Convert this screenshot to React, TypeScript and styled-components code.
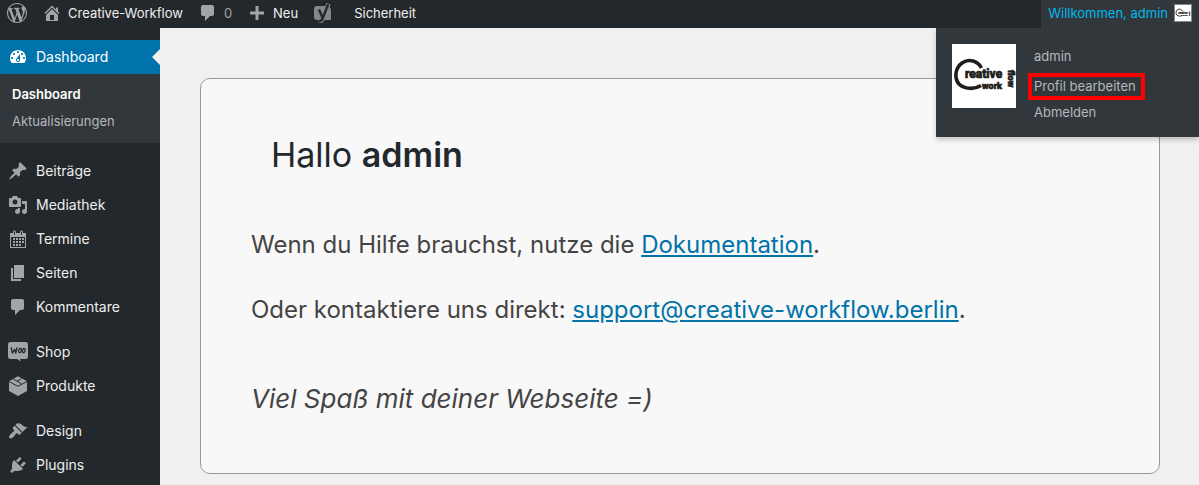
import React from 'react';
import styled, { createGlobalStyle } from 'styled-components';

const GlobalStyle = createGlobalStyle`
  *, *::before, *::after { box-sizing: border-box; }
  body {
    margin: 0;
    background: #f0f0f0;
    font-family: Inter, "Liberation Sans", sans-serif;
    font-size: 13px;
    line-height: 20px;
    color: #444;
  }
  ul { list-style: none; margin: 0; padding: 0; }
  a { color: inherit; text-decoration: none; }
`;

const Page = styled.div`
  display: flex;
  flex-direction: column;
  height: 100vh;
  overflow: hidden;
`;

const Toolbar = styled.header`
  display: flex;
  align-items: stretch;
  justify-content: space-between;
  flex: none;
  height: 28px;
  padding-left: 7px;
  background: #23282d;
  color: #eee;
`;

const ToolbarItems = styled.nav`
  display: flex;
  align-items: center;
  gap: 15px;
`;

const ToolbarLink = styled.a<{ $muted?: boolean; $spaced?: boolean }>`
  display: flex;
  align-items: center;
  gap: 6px;
  padding-bottom: 2px;
  padding-right: ${(p) => (p.$spaced ? '6px' : '0')};
  color: #eee;
  span { color: ${(p) => (p.$muted ? '#9ea3a8' : '#eee')}; }
`;

const Account = styled.div`
  position: relative;
  display: flex;
`;

const AccountButton = styled.button`
  display: flex;
  align-items: center;
  gap: 6px;
  border: 0;
  padding: 0 7px 2px 7px;
  background: #32373c;
  color: #00b9eb;
  font: inherit;
`;

const SmallAvatar = styled.span`
  display: flex;
  width: 18px;
  height: 18px;
  border: 1px solid #82878c;
  background: #fff;
`;

const AccountMenu = styled.div`
  position: absolute;
  top: 100%;
  right: 0;
  z-index: 2;
  display: flex;
  align-items: flex-start;
  gap: 12px;
  width: 263px;
  padding: 16px 16px 12px;
  background: #32373c;
  box-shadow: 0 3px 5px rgba(0, 0, 0, 0.2);
  color: #b4b9be;
`;

const Avatar = styled.span`
  display: flex;
  flex: none;
  width: 64px;
  height: 64px;
  background: #fff;
`;

const AccountLinks = styled.ul`
  display: flex;
  flex-direction: column;
  align-items: flex-start;
`;

const AccountLink = styled.a<{ $marked?: boolean }>`
  display: block;
  border: ${(p) => (p.$marked ? '4px solid #f00' : '0 solid')};
  margin: ${(p) => (p.$marked ? '4px 0 0' : '0')};
  padding: ${(p) => (p.$marked ? '0 5px 0 2px' : '0 6px')};
  line-height: ${(p) => (p.$marked ? '19px' : '25px')};
`;

const Body = styled.div`
  display: flex;
  flex: 1;
  min-height: 0;
`;

const Sidebar = styled.nav`
  flex: none;
  width: 160px;
  padding-top: 12px;
  background: #23282d;
  color: #eee;
  overflow: hidden;
`;

const MenuGroup = styled.ul`
  margin-bottom: 11px;
`;

const MenuLink = styled.a<{ $current?: boolean }>`
  position: relative;
  display: flex;
  align-items: center;
  gap: 8px;
  height: 34px;
  padding-left: 8px;
  font-size: 14px;
  color: ${(p) => (p.$current ? '#fff' : '#eee')};
  background: ${(p) => (p.$current ? '#0073aa' : 'transparent')};
  svg { color: ${(p) => (p.$current ? '#fff' : '#a0a5aa')}; }
  &::after {
    content: '';
    display: ${(p) => (p.$current ? 'block' : 'none')};
    position: absolute;
    top: 9px;
    right: 0;
    border: 8px solid transparent;
    border-left-width: 0;
    border-right-color: #f0f0f0;
  }
`;

const Submenu = styled.ul`
  padding: 7px 0 8px 12px;
  background: #32373c;
`;

const SubmenuLink = styled.a<{ $current?: boolean }>`
  display: block;
  line-height: 27px;
  color: ${(p) => (p.$current ? '#fff' : '#b4b9be')};
  font-weight: ${(p) => (p.$current ? 600 : 400)};
`;

const Main = styled.main`
  flex: 1;
  min-width: 0;
  padding: 50px 39px 11px 40px;
`;

const Panel = styled.section`
  padding: 56px 50px 54px;
  border: 1px solid #999;
  border-radius: 10px;
  background: #f8f8f8;
`;

const Title = styled.h1`
  margin: 0 20px 50px;
  color: #23282d;
  font-size: 34px;
  font-weight: 400;
  line-height: 40px;
  strong { font-weight: 600; }
`;

const Paragraph = styled.p<{ $closing?: boolean }>`
  margin: ${(p) => (p.$closing ? '49px 0 0' : '0 0 25px')};
  font-size: ${(p) => (p.$closing ? '26px' : '24px')};
  font-style: ${(p) => (p.$closing ? 'italic' : 'normal')};
  line-height: 40px;
  a { color: #0073aa; text-decoration: underline; }
`;

const icons = {
  wordpress:
    'M20 10c0-5.51-4.49-10-10-10C4.48 0 0 4.49 0 10c0 5.52 4.48 10 10 10 5.51 0 10-4.48 10-10zM7.78 15.37L4.37 6.22c.55-.02 1.17-.08 1.17-.08.5-.06.44-1.13-.06-1.11 0 0-1.45.11-2.37.11-.18 0-.37 0-.58-.01C4.12 2.69 6.87 1.11 10 1.11c2.33 0 4.45.87 6.05 2.34-.68-.11-1.65.39-1.65 1.58 0 .74.45 1.36.9 2.1.35.61.55 1.36.55 2.46 0 1.49-1.4 5-1.4 5l-3.03-8.37c.54-.02.82-.17.82-.17.5-.05.44-1.25-.06-1.22 0 0-1.44.12-2.38.12-.87 0-2.33-.12-2.33-.12-.5-.03-.56 1.2-.06 1.22l.92.08 1.26 3.41zM17.41 10c.24-.64.74-1.87.43-4.25.7 1.29 1.05 2.71 1.05 4.25 0 3.29-1.73 6.24-4.4 7.78.97-2.59 1.94-5.2 2.92-7.78zM6.1 18.09C3.12 16.65 1.11 13.53 1.11 10c0-1.3.23-2.48.72-3.59C3.25 10.3 4.67 14.2 6.1 18.09zm4.03-6.63l2.58 6.98c-.86.29-1.76.45-2.71.45-.79 0-1.57-.11-2.29-.33.81-2.38 1.62-4.74 2.42-7.1z',
  home: 'M16 8.5l1.53 1.53-1.06 1.06L10 4.6l-6.47 6.49-1.06-1.06L10 2.5l4 4v-2h2v4zm-6-2.46l6 5.99V18H4v-5.97zM12 17v-5H8v5h4z',
  comment: 'M5 2h9c1.1 0 2 .9 2 2v7c0 1.1-.9 2-2 2h-2l-5 5v-5H5c-1.1 0-2-.9-2-2V4c0-1.1.9-2 2-2z',
  plus: 'M17 8.500v3h-5.500V17h-3v-5.500H3v-3h5.500V3h3v5.500z',
  dashboard:
    'M3.76 16h12.48c1.1-1.37 1.76-3.11 1.76-5 0-4.42-3.58-8-8-8s-8 3.58-8 8c0 1.89.66 3.63 1.76 5zM10 4c.55 0 1 .45 1 1s-.45 1-1 1-1-.45-1-1 .45-1 1-1zM6 6c.55 0 1 .45 1 1s-.45 1-1 1-1-.45-1-1 .45-1 1-1zm8 0c.55 0 1 .45 1 1s-.45 1-1 1-1-.45-1-1 .45-1 1-1zm-5.37 5.55L12 7v6c0 1.1-.9 2-2 2s-2-.9-2-2c0-.57.24-1.08.63-1.45zM4 10c.55 0 1 .45 1 1s-.45 1-1 1-1-.45-1-1 .45-1 1-1zm12 0c.55 0 1 .45 1 1s-.45 1-1 1-1-.45-1-1 .45-1 1-1zm-5 3c0-.55-.45-1-1-1s-1 .45-1 1 .45 1 1 1 1-.45 1-1z',
  pin: 'M10.44 3.02l1.82-1.82 6.36 6.35-1.83 1.82c-1.05-.68-2.48-.57-3.41.36l-.75.75c-.92.93-1.04 2.35-.35 3.41l-1.83 1.82-2.41-2.41-2.8 2.79c-.42.42-3.38 2.71-3.8 2.29s1.86-3.39 2.28-3.81l2.79-2.79L4.1 9.36l1.83-1.82c1.05.69 2.48.57 3.4-.36l.75-.75c.93-.92 1.05-2.35.36-3.41z',
  media:
    'M13 11V4c0-.55-.45-1-1-1h-1.67L9 1H5L3.67 3H2c-.55 0-1 .45-1 1v7c0 .55.45 1 1 1h10c.55 0 1-.45 1-1zM7 4.5c1.38 0 2.5 1.12 2.5 2.5S8.38 9.5 7 9.5 4.5 8.38 4.5 7 5.62 4.5 7 4.5zM14 6h5v10.5c0 1.38-1.12 2.5-2.5 2.5S14 17.88 14 16.5s1.12-2.5 2.5-2.5c.17 0 .34.02.5.05V9h-3V6zm-4 8.05V13h2v3.5c0 1.38-1.12 2.5-2.5 2.5S7 17.88 7 16.5 8.12 14 9.5 14c.17 0 .34.02.5.05z',
  calendar:
    'M15 4h3v15H2V4h3V3c0-.83.67-1.5 1.5-1.5S8 2.17 8 3v1h4V3c0-.83.67-1.5 1.5-1.5S15 2.17 15 3v1zM6 3v2.5c0 .28.22.5.5.5s.5-.22.5-.5V3c0-.28-.22-.5-.5-.5S6 2.72 6 3zm7 0v2.5c0 .28.22.5.5.5s.5-.22.5-.5V3c0-.28-.22-.5-.5-.5s-.5.22-.5.5zm4 15V8H3v10h14zM5 9h2v2H5zM8 9h2v2H8zM11 9h2v2h-2zM14 9h2v2h-2zM5 12h2v2H5zM8 12h2v2H8zM11 12h2v2h-2zM14 12h2v2h-2zM5 15h2v2H5zM8 15h2v2H8zM11 15h2v2h-2z',
  page: 'M6 15V2h10v13H6zm-1 1h8v2H3V5h2v11z',
  brush:
    'M14.48 11.06L7.41 3.99l1.5-1.5c.5-.56 2.3-.47 3.51.32 1.21.8 1.43 1.28 2.91 2.1 1.18.64 2.45 1.26 4.45.85zm-.71.71L6.7 4.7 4.93 6.47c-.39.39-.39 1.02 0 1.41l1.06 1.06c.39.39.39 1.03 0 1.42-.6.6-1.43 1.11-2.21 1.69-.35.26-.7.53-1.01.84C1.43 14.23.4 16.08 1.4 17.07c.99 1 2.84-.03 4.18-1.36.31-.31.58-.66.85-1.02.57-.78 1.08-1.61 1.69-2.21.39-.39 1.02-.39 1.41 0l1.06 1.06c.39.39 1.02.39 1.41 0z',
  plug: 'M13.11 4.36L9.87 7.6 8 5.73l3.24-3.24c.35-.34 1.05-.2 1.56.32.52.51.66 1.21.31 1.55zm-8 1.77l.91-1.12 9.01 9.01-1.19.84c-.71.71-2.63 1.16-3.82 1.16H6.14L4.9 17.26c-.59.59-1.54.59-2.12 0-.59-.58-.59-1.53 0-2.12l1.24-1.24v-3.88c0-1.13.4-3.19 1.09-3.89zm7.26 3.97l3.24-3.24c.34-.35 1.04-.21 1.55.31.52.51.66 1.21.31 1.55l-3.24 3.25z',
};

type IconName = keyof typeof icons;

const IconSvg = styled.svg`
  flex: none;
  width: 20px;
  height: 20px;
  fill: currentColor;
  color: #a0a5aa;
`;

const Icon = ({ name }: { name: IconName }) => (
  <IconSvg viewBox="0 0 20 20" aria-hidden="true">
    <path fillRule="evenodd" d={icons[name]} />
  </IconSvg>
);

const YoastIcon = () => (
  <IconSvg viewBox="0 0 20 20" aria-hidden="true">
    <path fill="#82878c" d="M4 3h10.5L9.500 17H4a3 3 0 0 1-3-3V6a3 3 0 0 1 3-3zM16 4.200a3 3 0 0 1 2 2.800v10h-7z" />
    <path d="M15.600.8L10.200 14.500Q8.800 18.500 5.500 18.800" fill="none" stroke="#82878c" strokeWidth="4.400" />
    <path d="M6 6.500L9.200 14M15.200 1.200L10.200 14Q8.800 18.200 5.500 18.500" fill="none" stroke="#23282d" strokeWidth="2.400" />
  </IconSvg>
);

const WooIcon = () => (
  <IconSvg viewBox="0 0 20 20" aria-hidden="true">
    <path d="M2.500 0h15A2.500 2.500 0 0 1 20 2.500v12a2.500 2.500 0 0 1-2.500 2.500H12l.5 2.500-3.500-2.500H2.500A2.500 2.500 0 0 1 0 14.500v-12A2.500 2.500 0 0 1 2.500 0z" />
    <g fill="none" stroke="#23282d" strokeWidth="1.300" strokeLinejoin="round" strokeLinecap="round">
      <path d="M3.200 6L4.500 11.200L6.600 7.300L7.800 11.200L9 5.800" />
      <ellipse cx="12" cy="8.600" rx="1.300" ry="2.200" transform="rotate(14 12 8.600)" />
      <ellipse cx="15.800" cy="8.600" rx="1.300" ry="2.200" transform="rotate(14 15.800 8.600)" />
    </g>
  </IconSvg>
);

const BoxIcon = () => (
  <IconSvg viewBox="0 0 20 20" aria-hidden="true">
    <path d="M10 .2l9 5v9.800l-9 5-9-5V5.200z" />
    <path d="M1 5.500l8.800 4.800L19 5.500M5.200 3l8.300 4.800M9 5.200l4.600-2.600" fill="none" stroke="#23282d" strokeWidth="1" />
  </IconSvg>
);

const BrandLogo = () => (
  <svg viewBox="0 0 64 64" width="100%" height="100%" aria-hidden="true">
    <path d="M29.500 24C26 17 17 14 10 19C3 24 2 34 7 40C12 45 22 46 29 41.500" fill="none" stroke="#1d1d1b" strokeWidth="3.600" />
    <g fill="#1d1d1b" stroke="#1d1d1b" strokeWidth=".7" fontFamily="Roboto, 'Liberation Sans', sans-serif" fontWeight="800">
      <text x="13" y="34" fontSize="12">reative</text>
      <text x="30" y="45" fontSize="9">work</text>
      <text transform="translate(56 26) rotate(90)" fontSize="9">flow</text>
    </g>
  </svg>
);

const contentMenu: { label: string; icon: IconName }[] = [
  { label: 'Beiträge', icon: 'pin' },
  { label: 'Mediathek', icon: 'media' },
  { label: 'Termine', icon: 'calendar' },
  { label: 'Seiten', icon: 'page' },
  { label: 'Kommentare', icon: 'comment' },
];

const systemMenu: { label: string; icon: IconName }[] = [
  { label: 'Design', icon: 'brush' },
  { label: 'Plugins', icon: 'plug' },
];

const MenuEntry = ({ label, icon }: { label: string; icon: IconName }) => (
  <li>
    <MenuLink href="#"><Icon name={icon} />{label}</MenuLink>
  </li>
);

export default function App() {
  return (
    <>
      <GlobalStyle />
      <Page>
        <Toolbar>
          <ToolbarItems aria-label="Werkzeugleiste">
            <ToolbarLink href="#" aria-label="WordPress"><Icon name="wordpress" /></ToolbarLink>
            <ToolbarLink href="#"><Icon name="home" /><span>Creative-Workflow</span></ToolbarLink>
            <ToolbarLink href="#" $muted><Icon name="comment" /><span>0</span></ToolbarLink>
            <ToolbarLink href="#"><Icon name="plus" /><span>Neu</span></ToolbarLink>
            <ToolbarLink href="#" aria-label="Yoast SEO" $spaced><YoastIcon /></ToolbarLink>
            <ToolbarLink href="#"><span>Sicherheit</span></ToolbarLink>
          </ToolbarItems>
          <Account>
            <AccountButton type="button">
              Willkommen, admin
              <SmallAvatar><BrandLogo /></SmallAvatar>
            </AccountButton>
            <AccountMenu>
              <Avatar><BrandLogo /></Avatar>
              <AccountLinks>
                <li><AccountLink href="#">admin</AccountLink></li>
                <li><AccountLink href="#" $marked>Profil bearbeiten</AccountLink></li>
                <li><AccountLink href="#">Abmelden</AccountLink></li>
              </AccountLinks>
            </AccountMenu>
          </Account>
        </Toolbar>
        <Body>
          <Sidebar aria-label="Hauptmenü">
            <MenuGroup>
              <li>
                <MenuLink href="#" $current><Icon name="dashboard" />Dashboard</MenuLink>
                <Submenu>
                  <li><SubmenuLink href="#" $current>Dashboard</SubmenuLink></li>
                  <li><SubmenuLink href="#">Aktualisierungen</SubmenuLink></li>
                </Submenu>
              </li>
            </MenuGroup>
            <MenuGroup>
              {contentMenu.map((entry) => <MenuEntry key={entry.label} {...entry} />)}
            </MenuGroup>
            <MenuGroup>
              <li><MenuLink href="#"><WooIcon />Shop</MenuLink></li>
              <li><MenuLink href="#"><BoxIcon />Produkte</MenuLink></li>
            </MenuGroup>
            <MenuGroup>
              {systemMenu.map((entry) => <MenuEntry key={entry.label} {...entry} />)}
            </MenuGroup>
          </Sidebar>
          <Main>
            <Panel>
              <Title>Hallo <strong>admin</strong></Title>
              <Paragraph>Wenn du Hilfe brauchst, nutze die <a href="#">Dokumentation</a>.</Paragraph>
              <Paragraph>Oder kontaktiere uns direkt: <a href="mailto:support@creative-workflow.berlin">support@creative-workflow.berlin</a>.</Paragraph>
              <Paragraph $closing>Viel Spaß mit deiner Webseite =)</Paragraph>
            </Panel>
          </Main>
        </Body>
      </Page>
    </>
  );
}
